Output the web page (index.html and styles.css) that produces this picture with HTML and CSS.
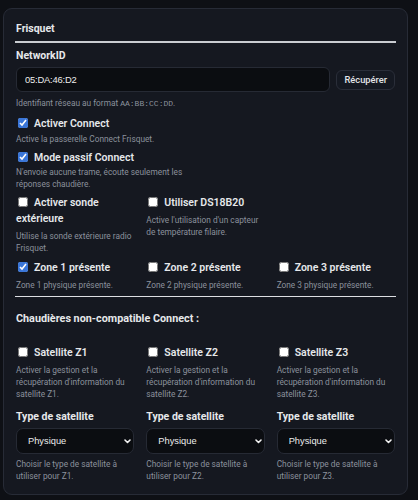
FILE: index.html
```html
<!DOCTYPE html>
<html lang="fr">
<head>
    <meta charset="UTF-8">
    <meta name="viewport" content="width=device-width, initial-scale=1.0">
    <title>Frisquet - Configuration</title>
    <link rel="stylesheet" href="styles.css">
</head>
<body>
    <div class="card">
        <h3 class="card-title">Frisquet</h3>
        <hr class="rule">

        <label class="field-label" for="network-id">NetworkID</label>
        <div class="input-row">
            <input id="network-id" class="text-input" type="text" value="05:DA:46:D2">
            <button class="btn" type="button">Récupérer</button>
        </div>
        <p class="hint hint-first">Identifiant réseau au format <code>AA:BB:CC:DD</code>.</p>

        <div class="field field-wide first">
            <label class="check"><input type="checkbox" checked>Activer Connect</label>
            <p class="hint">Active la passerelle Connect Frisquet.</p>
        </div>
        <div class="field field-wide">
            <label class="check"><input type="checkbox" checked>Mode passif Connect</label>
            <p class="hint hint-tight">N'envoie aucune trame, écoute seulement les réponses chaudière.</p>
        </div>

        <div class="grid grid-sonde">
            <div class="field">
                <label class="check"><input type="checkbox">Activer sonde extérieure</label>
                <p class="hint">Utilise la sonde extérieure radio Frisquet.</p>
            </div>
            <div class="field">
                <label class="check"><input type="checkbox">Utiliser DS18B20</label>
                <p class="hint">Active l'utilisation d'un capteur de température filaire.</p>
            </div>
        </div>

        <div class="grid grid-zones">
            <div class="field">
                <label class="check"><input type="checkbox" checked>Zone 1 présente</label>
                <p class="hint">Zone 1 physique présente.</p>
            </div>
            <div class="field">
                <label class="check"><input type="checkbox">Zone 2 présente</label>
                <p class="hint">Zone 2 physique présente.</p>
            </div>
            <div class="field">
                <label class="check"><input type="checkbox">Zone 3 présente</label>
                <p class="hint">Zone 3 physique présente.</p>
            </div>
        </div>

        <hr class="rule rule-thin">

        <h4 class="section-title">Chaudières non-compatible Connect :</h4>

        <div class="grid grid-satellites">
            <div class="field">
                <label class="check"><input type="checkbox">Satellite Z1</label>
                <p class="hint">Activer la gestion et la récupération d'information du satellite Z1.</p>
                <label class="field-label sat-type">Type de satellite</label>
                <div class="select-wrap">
                    <select class="select"><option>Physique</option><option>Virtuel</option></select>
                    <svg class="chevron" width="7" height="5" viewBox="0 0 7 5"><path d="M1 1l2.5 2.5L6 1" fill="none" stroke="#f2f2f2" stroke-width="1.6" stroke-linecap="round" stroke-linejoin="round"/></svg>
                </div>
                <p class="hint hint-select">Choisir le type de satellite à utiliser pour Z1.</p>
            </div>
            <div class="field">
                <label class="check"><input type="checkbox">Satellite Z2</label>
                <p class="hint">Activer la gestion et la récupération d'information du satellite Z2.</p>
                <label class="field-label sat-type">Type de satellite</label>
                <div class="select-wrap">
                    <select class="select"><option>Physique</option><option>Virtuel</option></select>
                    <svg class="chevron" width="7" height="5" viewBox="0 0 7 5"><path d="M1 1l2.5 2.5L6 1" fill="none" stroke="#f2f2f2" stroke-width="1.6" stroke-linecap="round" stroke-linejoin="round"/></svg>
                </div>
                <p class="hint hint-select">Choisir le type de satellite à utiliser pour Z2.</p>
            </div>
            <div class="field">
                <label class="check"><input type="checkbox">Satellite Z3</label>
                <p class="hint">Activer la gestion et la récupération d'information du satellite Z3.</p>
                <label class="field-label sat-type">Type de satellite</label>
                <div class="select-wrap">
                    <select class="select"><option>Physique</option><option>Virtuel</option></select>
                    <svg class="chevron" width="7" height="5" viewBox="0 0 7 5"><path d="M1 1l2.5 2.5L6 1" fill="none" stroke="#f2f2f2" stroke-width="1.6" stroke-linecap="round" stroke-linejoin="round"/></svg>
                </div>
                <p class="hint hint-select">Choisir le type de satellite à utiliser pour Z3.</p>
            </div>
        </div>
    </div>
</body>
</html>
```

FILE: styles.css
```css
* {
    box-sizing: border-box;
}
body {
    margin: 0;
    padding: 8px 10px 6px 3px;
    background-color: #0e1015;
    font-family: Roboto, "Noto Sans", sans-serif;
    color: #e6e8eb;
}
.card {
    background-color: #151820;
    border: 1px solid #272b36;
    border-radius: 9px;
    padding: 12px 12px 12px 12px;
}
.card-title {
    margin: 0;
    font-size: 10.5px;
    font-weight: 700;
    line-height: 16px;
}
.rule {
    margin: 4px -1px 0;
    border: 0;
    border-top: 2px solid #c9ccd1;
}
.rule-thin {
    margin-top: 5px;
    border-top: 1px solid #dcdee2;
}
.field-label {
    display: block;
    margin-top: 5px;
    font-size: 10.5px;
    font-weight: 700;
    line-height: 16px;
}
.input-row {
    display: flex;
    align-items: center;
    gap: 6px;
    margin-top: 3px;
}
.text-input {
    flex: 1;
    height: 25px;
    padding: 0 8px;
    background-color: #0b0d11;
    border: 1px solid #262a34;
    border-radius: 6px;
    color: #ececec;
    font-family: "Liberation Sans", Arial, sans-serif;
    font-size: 9.4px;
    letter-spacing: -0.2px;
    outline: none;
}
.btn {
    height: 20px;
    padding: 0 7px;
    background-color: #151922;
    border: 1px solid #2a2e39;
    border-radius: 6px;
    color: #e3e5e8;
    font-family: Roboto, sans-serif;
    font-size: 9.3px;
    font-weight: 500;
}
.hint {
    margin: 3px 0 0;
    font-size: 8.3px;
    line-height: 12px;
    color: #8b919c;
}
.hint code {
    font-family: "Liberation Mono", monospace;
    font-size: 8px;
}
.hint-first {
    margin-top: 5px;
}
.field-wide {
    max-width: 184px;
    margin-top: 5px;
}
.field-wide.first {
    margin-top: 6px;
}
.field-wide .hint {
    margin-top: 1px;
}
.field-wide .hint-tight {
    margin-top: 0;
}
.check {
    display: block;
    font-size: 10.5px;
    font-weight: 600;
    line-height: 16px;
}
.check input {
    width: 10px;
    height: 10px;
    margin: 0 6px 0 2px;
    vertical-align: -1px;
    accent-color: #3a76d8;
}
.grid {
    display: grid;
    grid-template-columns: repeat(3, 1fr);
    column-gap: 12px;
}
.grid-sonde {
    margin-top: 5px;
}
.grid-zones {
    margin-top: 6px;
}
.section-title {
    margin: 14px 0 0;
    font-size: 10.8px;
    font-weight: 700;
    line-height: 16px;
}
.grid-satellites {
    margin-top: 18px;
}
.sat-type {
    margin-top: 9px;
}
.select-wrap {
    position: relative;
    margin-top: 3px;
}
.select {
    display: block;
    width: 100%;
    height: 26px;
    padding: 0 0 0 11px;
    appearance: none;
    background-color: #0b0d11;
    border: 1px solid #262a34;
    border-radius: 7px;
    color: #ececec;
    font-family: "Liberation Sans", Arial, sans-serif;
    font-size: 9.3px;
}
.chevron {
    position: absolute;
    right: 3px;
    top: 11px;
    pointer-events: none;
}
.hint-select {
    margin-top: 4px;
}
```
